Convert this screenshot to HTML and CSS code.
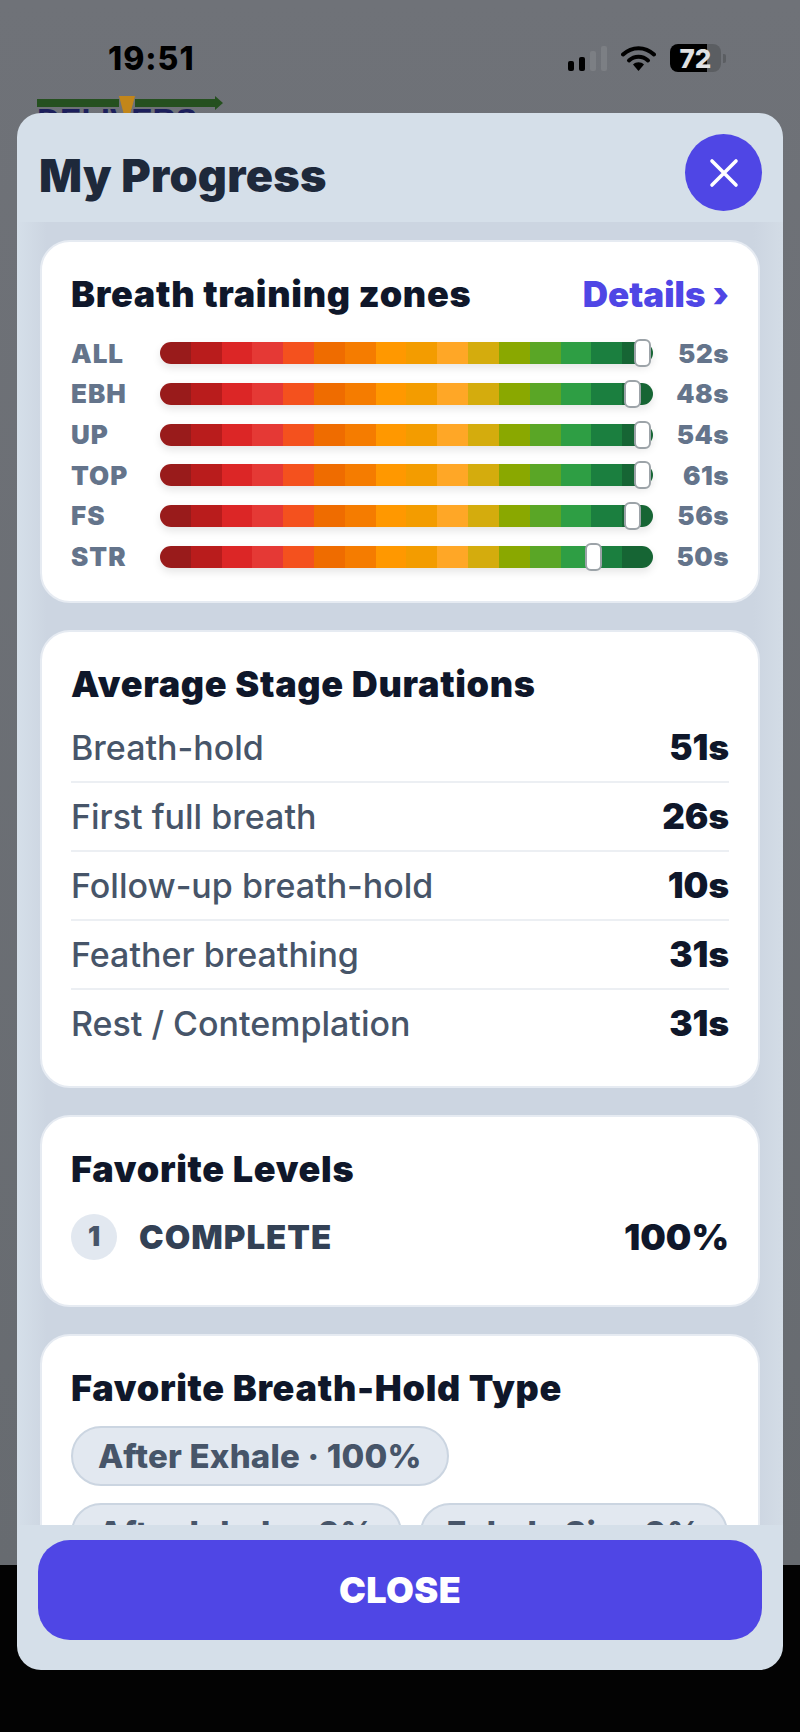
FILE: index.html
```html
<!DOCTYPE html>
<html lang="en">
<head>
    <meta charset="UTF-8">
    <meta name="viewport" content="width=device-width, initial-scale=1.0">
    <title>My Progress</title>
    <link rel="stylesheet" href="styles.css">
</head>
<body>
    <div class="backdrop">
        <div class="statusBar">
            <span class="clock">19:51</span>
            <div class="statusIcons">
                <div class="signal">
                    <span class="signalBar on h10"></span>
                    <span class="signalBar on h14"></span>
                    <span class="signalBar h20"></span>
                    <span class="signalBar h25"></span>
                </div>
                <svg class="wifi" width="35" height="25" viewBox="0 0 35 25">
                    <path d="M2 8.5C11 0 24 0 33 8.5" fill="none" stroke="#000" stroke-width="4" stroke-linecap="round"/>
                    <path d="M8 14.5C13.5 9.5 21.5 9.5 27 14.5" fill="none" stroke="#000" stroke-width="4" stroke-linecap="round"/>
                    <path d="M12 18.5C15 15.5 20 15.5 23 18.5L17.5 25Z" fill="#000"/>
                </svg>
                <div class="battery">
                    <div class="batteryBody"><span class="batteryLevel">72</span></div>
                    <span class="batteryNub"></span>
                </div>
            </div>
        </div>
        <div class="brand">
            <span class="brandName">DELIVERS</span>
            <svg class="brandArrow" width="186" height="30" viewBox="0 0 186 30">
                <path d="M0 3H82V11H0ZM98 3H178V0L186 7L178 14V11H98Z" fill="#25501f"/>
                <path d="M82 0H98L90 30Z" fill="#c2861a"/>
            </svg>
        </div>
    </div>

    <div class="modal">
        <div class="modalHeader">
            <h1 class="modalTitle">My Progress</h1>
            <button class="iconButton">
                <svg width="30" height="30" viewBox="0 0 30 30">
                    <path d="M3 3L27 27M27 3L3 27" stroke="#fff" stroke-width="3.6" stroke-linecap="round"/>
                </svg>
            </button>
        </div>

        <div class="modalBody">
            <section class="card zones">
                <div class="cardHead">
                    <h2 class="cardTitle">Breath training zones</h2>
                    <span class="detailsLink">Details ›</span>
                </div>
                <div class="zoneList">
                    <div class="zoneRow">
                        <span class="zoneLabel">ALL</span>
                        <div class="zoneTrack"><span class="zoneThumb" style="left: 96.1%"></span></div>
                        <span class="zoneValue">52s</span>
                    </div>
                    <div class="zoneRow">
                        <span class="zoneLabel">EBH</span>
                        <div class="zoneTrack"><span class="zoneThumb" style="left: 94.1%"></span></div>
                        <span class="zoneValue">48s</span>
                    </div>
                    <div class="zoneRow">
                        <span class="zoneLabel">UP</span>
                        <div class="zoneTrack"><span class="zoneThumb" style="left: 96.1%"></span></div>
                        <span class="zoneValue">54s</span>
                    </div>
                    <div class="zoneRow">
                        <span class="zoneLabel">TOP</span>
                        <div class="zoneTrack"><span class="zoneThumb" style="left: 96.1%"></span></div>
                        <span class="zoneValue">61s</span>
                    </div>
                    <div class="zoneRow">
                        <span class="zoneLabel">FS</span>
                        <div class="zoneTrack"><span class="zoneThumb" style="left: 94.1%"></span></div>
                        <span class="zoneValue">56s</span>
                    </div>
                    <div class="zoneRow">
                        <span class="zoneLabel">STR</span>
                        <div class="zoneTrack"><span class="zoneThumb" style="left: 86.2%"></span></div>
                        <span class="zoneValue">50s</span>
                    </div>
                </div>
            </section>

            <section class="card durations">
                <h2 class="cardTitle">Average Stage Durations</h2>
                <div class="stageList">
                    <div class="stageRow"><span class="stageName">Breath-hold</span><span class="stageValue">51s</span></div>
                    <div class="stageRow"><span class="stageName">First full breath</span><span class="stageValue">26s</span></div>
                    <div class="stageRow"><span class="stageName">Follow-up breath-hold</span><span class="stageValue">10s</span></div>
                    <div class="stageRow"><span class="stageName">Feather breathing</span><span class="stageValue">31s</span></div>
                    <div class="stageRow"><span class="stageName">Rest / Contemplation</span><span class="stageValue">31s</span></div>
                </div>
            </section>

            <section class="card levels">
                <h2 class="cardTitle">Favorite Levels</h2>
                <div class="levelRow">
                    <span class="levelRank">1</span>
                    <span class="levelName">COMPLETE</span>
                    <span class="levelShare">100%</span>
                </div>
            </section>

            <section class="card">
                <h2 class="cardTitle">Favorite Breath-Hold Type</h2>
                <div class="chipList">
                    <span class="chip">After Exhale · 100%</span>
                    <span class="chip">After Inhale · 0%</span>
                    <span class="chip">Exhale Sip · 0%</span>
                </div>
            </section>
        </div>

        <div class="modalFooter">
            <button class="closeButton">CLOSE</button>
        </div>
    </div>
</body>
</html>
```

FILE: styles.css
```css
html, body {
    margin: 0;
    padding: 0;
}

body {
    position: relative;
    height: 1732px;
    overflow: hidden;
    background-color: #030303;
    font-family: 'Inter', sans-serif;
}

/* Dimmed page behind the modal */
.backdrop {
    height: 1565px;
    background: linear-gradient(#6f7278, #676b70);
    overflow: hidden;
}

.statusBar {
    display: flex;
    justify-content: space-between;
    align-items: center;
    height: 28px;
    padding: 44px 74px 0 108px;
}

.clock {
    font-size: 32px;
    font-weight: 800;
    color: #000;
    letter-spacing: 1px;
}

.statusIcons {
    display: flex;
    align-items: center;
}

.signal {
    display: flex;
    align-items: flex-end;
    gap: 5px;
    height: 25px;
    margin-right: 14px;
}

.signalBar {
    width: 6px;
    border-radius: 2px;
    background-color: #7c7f84;
}

.signalBar.on { background-color: #000; }
.h10 { height: 10px; }
.h14 { height: 14px; }
.h20 { height: 20px; }
.h25 { height: 25px; }

.wifi {
    margin-right: 14px;
}

.battery {
    display: flex;
    align-items: center;
}

.batteryBody {
    display: flex;
    align-items: center;
    justify-content: center;
    width: 51px;
    height: 28px;
    border-radius: 8px;
    background: linear-gradient(to right, #000 73%, #5b5e62 73%);
}

.batteryLevel {
    font-size: 26px;
    font-weight: 800;
    color: #dfe0e2;
}

.batteryNub {
    width: 3px;
    height: 9px;
    margin-left: 2px;
    border-radius: 0 2px 2px 0;
    background-color: #5b5e62;
}

.brand {
    position: relative;
    margin: 24px 0 0 37px;
}

.brandArrow {
    position: relative;
    display: block;
}

.brandName {
    position: absolute;
    top: 6px;
    left: 0;
    font-family: 'Liberation Sans', sans-serif;
    font-size: 32px;
    font-weight: 700;
    color: #1c1f5c;
}

/* Modal */
.modal {
    position: absolute;
    top: 113px;
    left: 17px;
    width: 766px;
    height: 1557px;
    display: flex;
    flex-direction: column;
    border-radius: 24px;
    background-color: #d5dfe9;
    overflow: hidden;
}

.modalHeader {
    display: flex;
    justify-content: space-between;
    align-items: center;
    padding: 21px 21px 11px 22px;
}

.modalTitle {
    margin: 5px 0 0;
    font-size: 45px;
    font-weight: 900;
    letter-spacing: 0.3px;
    color: #1e293b;
}

.iconButton {
    display: flex;
    align-items: center;
    justify-content: center;
    width: 77px;
    height: 77px;
    padding: 0;
    border: none;
    border-radius: 50%;
    background-color: #4f46e5;
}

.modalBody {
    flex: 1;
    display: flex;
    flex-direction: column;
    gap: 27px;
    min-height: 0;
    padding: 18px 23px 0;
    overflow: hidden;
    background: linear-gradient(to right, #d5dfe9, #ccd5e1 30px, #ccd5e1 736px, #d3dce6);
}

.card {
    flex-shrink: 0;
    padding: 32px 29px 26px 29px;
    border: 2px solid #e6ebf2;
    border-radius: 30px;
    background-color: #fff;
}

.zones {
    padding-bottom: 24px;
}

.cardHead {
    display: flex;
    justify-content: space-between;
    align-items: center;
}

.cardTitle {
    margin: 0;
    font-size: 36px;
    line-height: 40px;
    font-weight: 900;
    letter-spacing: 0.7px;
    color: #0f172a;
}

.detailsLink {
    font-size: 35px;
    line-height: 40px;
    font-weight: 900;
    color: #4f46e5;
}

/* Zone bars */
.zoneList {
    display: flex;
    flex-direction: column;
    margin-top: 19px;
}

.zoneRow {
    display: grid;
    grid-template-columns: 89px 1fr 76px;
    align-items: center;
    height: 40.67px;
}

.zoneLabel {
    font-size: 26px;
    font-weight: 900;
    color: #64748b;
    letter-spacing: 1px;
}

.zoneValue {
    font-size: 26px;
    font-weight: 900;
    color: #64748b;
    text-align: right;
    letter-spacing: 0.5px;
}

.zoneTrack {
    position: relative;
    height: 22px;
    border-radius: 11px;
    box-shadow: 0 4px 8px rgba(0,0,0,0.1);
    background: linear-gradient(to right,
        #991b1b 0 6.25%, #b91c1c 0 12.5%, #dc2626 0 18.75%, #e53935 0 25%,
        #f4511e 0 31.25%, #ef6c00 0 37.5%, #f57c00 0 43.75%, #ff9800 0 50%,
        #f39c00 0 56.25%, #ffa726 0 62.5%, #d4ac0d 0 68.75%, #8aa800 0 75%,
        #5aa626 0 81.25%, #2e9e44 0 87.5%, #1b7f3f 0 93.75%, #166534 0 100%);
}

.zoneThumb {
    position: absolute;
    top: -3px;
    box-sizing: border-box;
    width: 17px;
    height: 28px;
    border: 2px solid #9ca3a8;
    border-radius: 6px;
    background-color: #fff;
}

/* Stage durations */
.durations {
    padding-bottom: 29px;
}

.stageList {
    margin-top: 10px;
}

.stageRow {
    display: flex;
    justify-content: space-between;
    align-items: center;
    height: 67px;
    border-bottom: 2px solid #eceff3;
}

.stageRow:last-child {
    border-bottom: none;
}

.stageName {
    font-size: 34px;
    font-weight: 500;
    color: #475569;
}

.stageValue {
    font-size: 35px;
    font-weight: 900;
    color: #0f172a;
}

/* Favorite levels */
.levels {
    padding-bottom: 45px;
}

.levelRow {
    display: flex;
    align-items: center;
    margin-top: 25px;
}

.levelRank {
    display: flex;
    align-items: center;
    justify-content: center;
    width: 46px;
    height: 46px;
    border-radius: 50%;
    background-color: #e2e8f0;
    font-size: 27px;
    font-weight: 900;
    color: #475569;
}

.levelName {
    flex: 1;
    margin-left: 22px;
    font-size: 33px;
    font-weight: 900;
    letter-spacing: 1px;
    color: #334155;
}

.levelShare {
    font-size: 36px;
    font-weight: 900;
    color: #0f172a;
}

/* Breath-hold chips */
.chipList {
    display: flex;
    flex-wrap: wrap;
    gap: 17px 18px;
    margin-top: 18px;
    margin-right: -20px;
}

.chip {
    display: flex;
    align-items: center;
    box-sizing: border-box;
    height: 60px;
    padding: 0 25px;
    border: 2px solid #cbd5e1;
    border-radius: 30px;
    background-color: #e2e8f0;
    font-size: 33px;
    font-weight: 800;
    letter-spacing: 0.2px;
    color: #475569;
}

.modalFooter {
    flex-shrink: 0;
    padding: 15px 21px 30px;
}

.closeButton {
    display: block;
    width: 100%;
    height: 100px;
    border: none;
    border-radius: 32px;
    background-color: #4f46e5;
    font-family: 'Inter', sans-serif;
    font-size: 36px;
    font-weight: 900;
    letter-spacing: 0.4px;
    color: #fff;
}
```
